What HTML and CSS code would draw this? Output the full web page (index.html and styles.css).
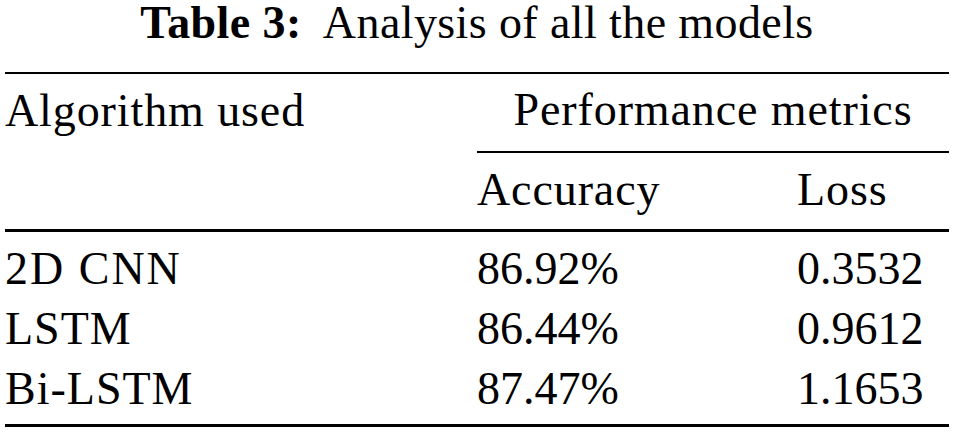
FILE: index.html
```html
<!DOCTYPE html>
<html lang="en">
<head>
    <meta charset="UTF-8">
    <meta name="viewport" content="width=device-width, initial-scale=1.0">
    <title>Table 3: Analysis of all the models</title>
    <link rel="stylesheet" href="styles.css">
</head>
<body>
    <div class="page">
        <!-- Caption -->
        <p class="caption"><b>Table 3:</b>&nbsp; Analysis of all the models</p>

        <!-- Results Table -->
        <table class="results">
            <thead>
                <tr class="head-top">
                    <th class="col-algo">Algorithm used</th>
                    <th class="group" colspan="2">Performance metrics</th>
                </tr>
                <tr class="head-sub">
                    <th class="col-algo"></th>
                    <th class="col-acc">Accuracy</th>
                    <th class="col-loss">Loss</th>
                </tr>
            </thead>
            <tbody>
                <tr class="first">
                    <td class="name wide">2D CNN</td>
                    <td>86.92%</td>
                    <td>0.3532</td>
                </tr>
                <tr>
                    <td class="name">LSTM</td>
                    <td>86.44%</td>
                    <td>0.9612</td>
                </tr>
                <tr class="last">
                    <td class="name">Bi-LSTM</td>
                    <td>87.47%</td>
                    <td>1.1653</td>
                </tr>
            </tbody>
        </table>
    </div>
</body>
</html>
```

FILE: styles.css
```css
/* Global Styles */
body {
    margin: 0;
    padding: 0;
    background-color: #fff;
    color: #000;
    font-family: 'Liberation Serif', 'Times New Roman', serif;
    font-size: 46px;
}

.page {
    width: 944px;
    margin-left: 5px;
}

/* Caption */
.caption {
    margin: 0 0 29px 0;
    padding-top: 3px;
    line-height: 40px;
    text-align: center;
    letter-spacing: 0.4px;
}

.caption b {
    font-weight: bold;
}

/* Table */
.results {
    width: 100%;
    border-collapse: collapse;
    border-top: 2px solid #000;
    border-bottom: 3px solid #000;
}

.results th,
.results td {
    padding: 0;
    font-weight: normal;
    text-align: left;
    line-height: 60px;
    white-space: nowrap;
}

.results th {
    letter-spacing: 0.9px;
}

.results td.name {
    letter-spacing: 1px;
}

.results td.wide {
    letter-spacing: 2px;
}

.col-algo {
    width: 472px;
}

.col-acc {
    width: 320px;
}

/* Header rows */
.head-top th {
    padding-top: 6px;
    padding-bottom: 11px;
}

.head-top .group {
    text-align: center;
    border-bottom: 2px solid #000;
}

.head-sub th {
    padding-top: 7px;
    padding-bottom: 9px;
    border-bottom: 3px solid #000;
}

/* Body rows */
.results tr.first td {
    padding-top: 7px;
}

.results tr.last td {
    padding-bottom: 5px;
}
```
